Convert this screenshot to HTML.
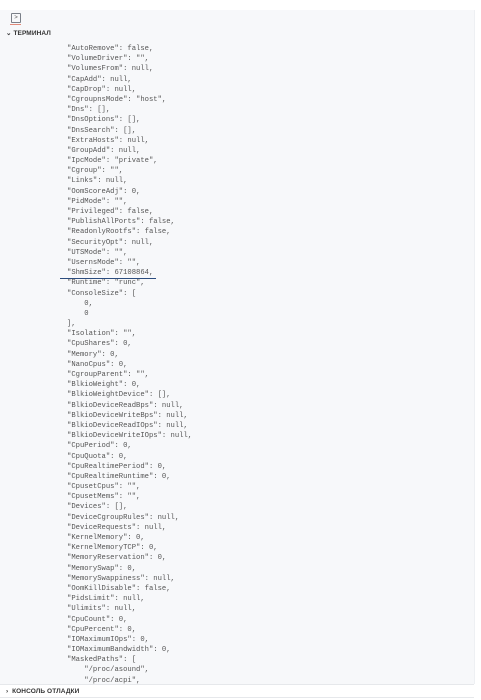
<!DOCTYPE html>
<html><head><meta charset="utf-8"><style>
html,body{margin:0;padding:0;background:#fff;width:481px;height:700px;overflow:hidden;position:relative;font-family:"Liberation Sans","Noto Sans CJK SC",sans-serif}
.panel{position:absolute;left:0;top:10px;width:474px;height:674px;background:#f7f8fa;border-right:1px solid #eef0f3}
.icon{position:absolute;left:11px;top:13px;width:8px;height:8px;border:1px solid #7a7f88;border-radius:1px;font-size:6px;line-height:8px;text-align:center;color:#555}
.iconline{position:absolute;left:10px;top:24px;width:11px;height:1px;background:#e08a7a}
.hdr{position:absolute;left:6px;font-size:6.5px;font-weight:bold;color:#333;letter-spacing:0.1px}
pre{position:absolute;left:67px;top:44px;margin:0;font-family:"Liberation Mono","DejaVu Sans Mono",monospace;font-size:7.2px;line-height:10.18px;color:#555}
.ul{position:absolute;left:60px;top:278px;width:96px;height:1px;background:#2b4c7e}
.bline{position:absolute;left:0;width:474px;height:1px;background:#e6e8eb}
</style></head><body>
<div class="panel"></div>
<div class="icon">&gt;</div>
<div class="iconline"></div>
<div class="hdr" style="top:29px">&#8964; ТЕРМИНАЛ</div>
<pre>"AutoRemove": false,
"VolumeDriver": "",
"VolumesFrom": null,
"CapAdd": null,
"CapDrop": null,
"CgroupnsMode": "host",
"Dns": [],
"DnsOptions": [],
"DnsSearch": [],
"ExtraHosts": null,
"GroupAdd": null,
"IpcMode": "private",
"Cgroup": "",
"Links": null,
"OomScoreAdj": 0,
"PidMode": "",
"Privileged": false,
"PublishAllPorts": false,
"ReadonlyRootfs": false,
"SecurityOpt": null,
"UTSMode": "",
"UsernsMode": "",
"ShmSize": 67108864,
"Runtime": "runc",
"ConsoleSize": [
    0,
    0
],
"Isolation": "",
"CpuShares": 0,
"Memory": 0,
"NanoCpus": 0,
"CgroupParent": "",
"BlkioWeight": 0,
"BlkioWeightDevice": [],
"BlkioDeviceReadBps": null,
"BlkioDeviceWriteBps": null,
"BlkioDeviceReadIOps": null,
"BlkioDeviceWriteIOps": null,
"CpuPeriod": 0,
"CpuQuota": 0,
"CpuRealtimePeriod": 0,
"CpuRealtimeRuntime": 0,
"CpusetCpus": "",
"CpusetMems": "",
"Devices": [],
"DeviceCgroupRules": null,
"DeviceRequests": null,
"KernelMemory": 0,
"KernelMemoryTCP": 0,
"MemoryReservation": 0,
"MemorySwap": 0,
"MemorySwappiness": null,
"OomKillDisable": false,
"PidsLimit": null,
"Ulimits": null,
"CpuCount": 0,
"CpuPercent": 0,
"IOMaximumIOps": 0,
"IOMaximumBandwidth": 0,
"MaskedPaths": [
    "/proc/asound",
    "/proc/acpi",</pre>
<div class="ul"></div>
<div class="bline" style="top:684px"></div>
<div class="hdr" style="top:688px;font-weight:bold">&#8250;&nbsp; КОНСОЛЬ ОТЛАДКИ</div>
<div class="bline" style="top:697px"></div>
</body></html>
